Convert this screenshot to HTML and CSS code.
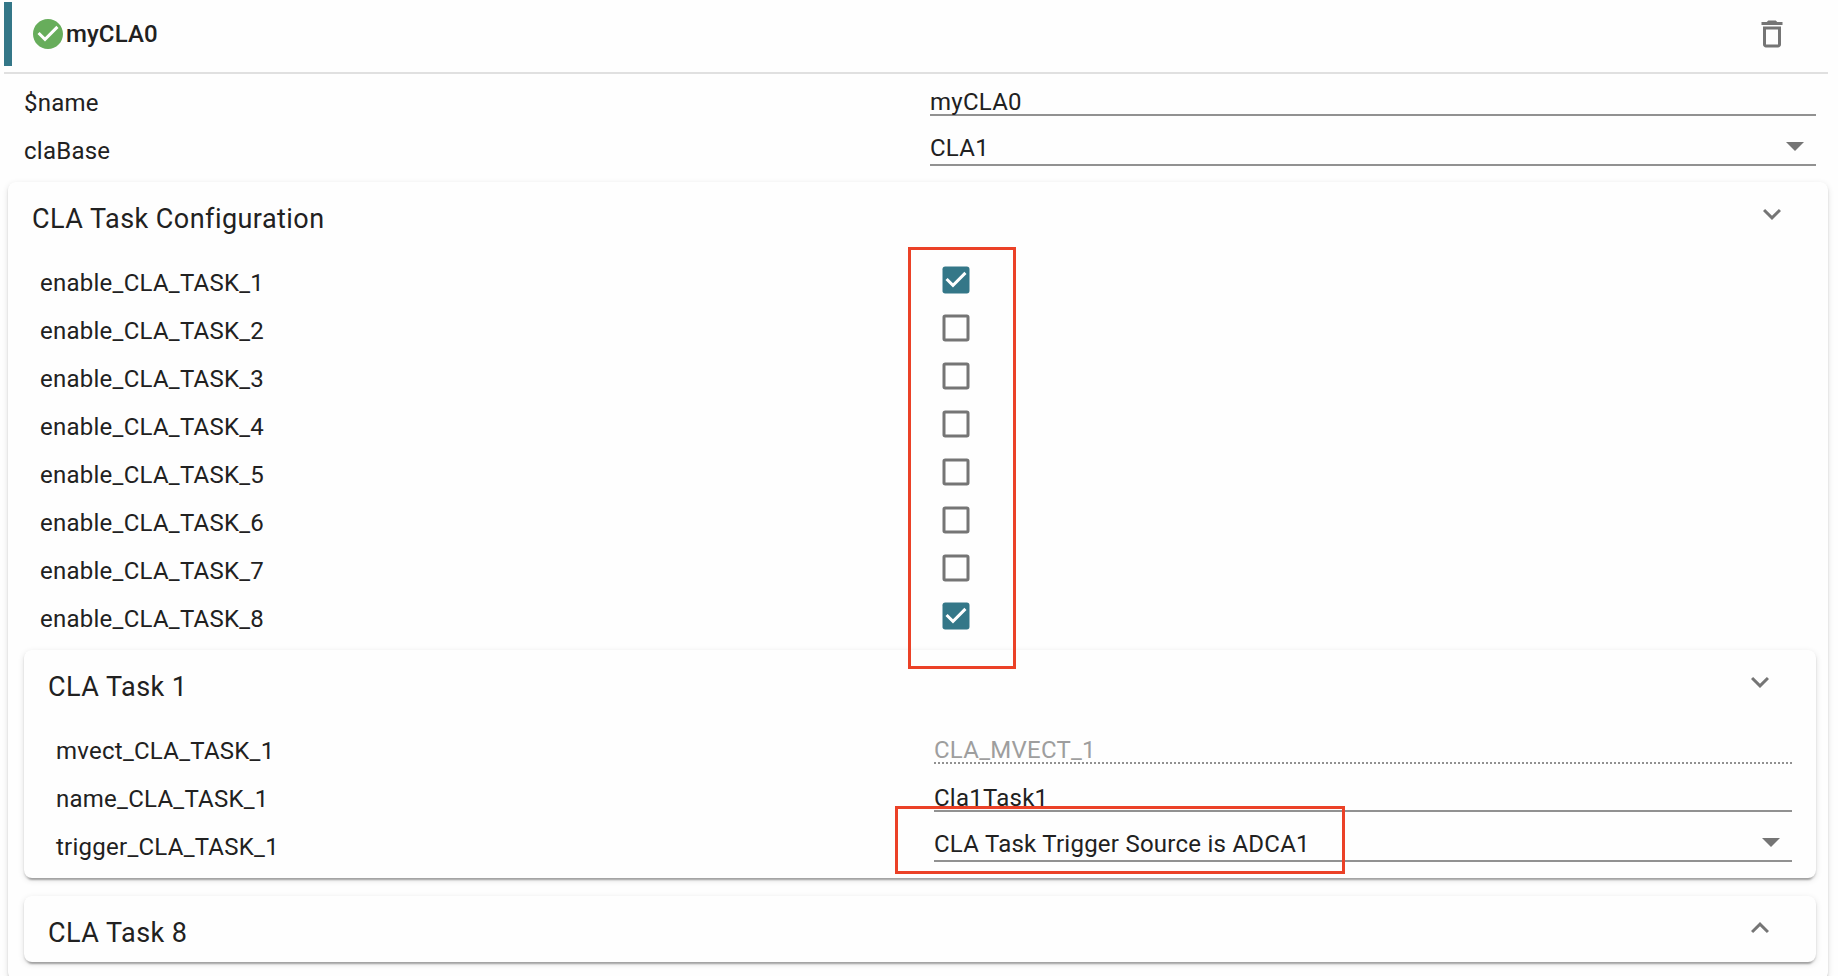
FILE: index.html
```html
<!DOCTYPE html>
<html lang="en">
<head>
<meta charset="utf-8">
<title>myCLA0</title>
<link rel="stylesheet" href="styles.css">
</head>
<body>
<svg class="defs" width="0" height="0">
  <symbol id="ok" viewBox="0 0 24 24"><path d="M12 2C6.48 2 2 6.48 2 12s4.48 10 10 10 10-4.48 10-10S17.52 2 12 2zm-2 15l-5-5 1.41-1.41L10 14.17l7.59-7.59L19 8l-9 9z"/></symbol>
  <symbol id="trash" viewBox="0 0 24 24"><path d="M6 19c0 1.1.9 2 2 2h8c1.1 0 2-.9 2-2V7H6v12zM8 9h8v10H8V9zm7.5-5l-1-1h-5l-1 1H5v2h14V4z"/></symbol>
  <symbol id="more" viewBox="0 0 24 24"><path d="M16.59 8.59L12 13.17 7.41 8.59 6 10l6 6 6-6z"/></symbol>
  <symbol id="less" viewBox="0 0 24 24"><path d="M12 8l-6 6 1.41 1.41L12 10.83l4.59 4.58L18 14z"/></symbol>
  <symbol id="on" viewBox="-.333 -.333 18.667 18.667"><rect width="18" height="18" rx="1.8"/><path class="tick" d="M7 14L2 9l1.41-1.41L7 11.17l7.59-7.59L16 5z"/></symbol>
  <symbol id="off" viewBox="-.333 -.333 18.667 18.667"><path fill-rule="evenodd" d="M1.8 0h14.4A1.8 1.8 0 0 1 18 1.8v14.4a1.8 1.8 0 0 1-1.8 1.8H1.8A1.8 1.8 0 0 1 0 16.2V1.8A1.8 1.8 0 0 1 1.8 0zM2 2v14h14V2z"/></symbol>
  <symbol id="drop" viewBox="0 0 18 9"><path d="M0 0h18L9 9z"/></symbol>
</svg>
<main class="module">
  <header class="bar">
    <svg class="icon ok"><use href="#ok"/></svg>
    <h1 class="title">myCLA0</h1>
    <svg class="icon trash"><use href="#trash"/></svg>
  </header>

  <div class="rows">
    <div class="row"><span class="label">$name</span><div class="field">myCLA0</div></div>
    <div class="row"><span class="label">claBase</span><div class="field select">CLA1<svg class="drop"><use href="#drop"/></svg></div></div>
  </div>

  <section class="card outer">
    <div class="card-head"><h2>CLA Task Configuration</h2><svg class="icon"><use href="#more"/></svg></div>
    <div class="rows checks">
      <div class="row"><span class="label">enable_CLA_TASK_1</span><svg class="box on"><use href="#on"/></svg></div>
      <div class="row"><span class="label">enable_CLA_TASK_2</span><svg class="box"><use href="#off"/></svg></div>
      <div class="row"><span class="label">enable_CLA_TASK_3</span><svg class="box"><use href="#off"/></svg></div>
      <div class="row"><span class="label">enable_CLA_TASK_4</span><svg class="box"><use href="#off"/></svg></div>
      <div class="row"><span class="label">enable_CLA_TASK_5</span><svg class="box"><use href="#off"/></svg></div>
      <div class="row"><span class="label">enable_CLA_TASK_6</span><svg class="box"><use href="#off"/></svg></div>
      <div class="row"><span class="label">enable_CLA_TASK_7</span><svg class="box"><use href="#off"/></svg></div>
      <div class="row"><span class="label">enable_CLA_TASK_8</span><svg class="box on"><use href="#on"/></svg></div>
    </div>

    <section class="card inner">
      <div class="card-head"><h2>CLA Task 1</h2><svg class="icon"><use href="#more"/></svg></div>
      <div class="rows nested">
        <div class="row"><span class="label">mvect_CLA_TASK_1</span><div class="field disabled">CLA_MVECT_1</div></div>
        <div class="row"><span class="label">name_CLA_TASK_1</span><div class="field">Cla1Task1</div></div>
        <div class="row"><span class="label">trigger_CLA_TASK_1</span><div class="field select">CLA Task Trigger Source is ADCA1<svg class="drop"><use href="#drop"/></svg></div></div>
      </div>
    </section>

    <section class="card inner collapsed">
      <div class="card-head"><h2>CLA Task 8</h2><svg class="icon"><use href="#less"/></svg></div>
    </section>
  </section>
</main>
<div class="mark mark-checks"></div>
<div class="mark mark-trigger"></div>
</body>
</html>
```
FILE: styles.css
```css
* { box-sizing: border-box; }
body {
  margin: 0;
  height: 976px;
  overflow: hidden;
  position: relative;
  background: #fefefe;
  color: #212121;
  font-family: Roboto, "Liberation Sans", sans-serif;
  font-size: 24px;
  letter-spacing: 0.25px;
}
.defs { position: absolute; }
h1, h2 { margin: 0; }
.module { padding: 2px 10px 0 4px; }
.bar {
  display: flex;
  align-items: center;
  height: 72px;
  padding: 0 38px 6px 26px;
  border-bottom: 2px solid #e0e0e0;
  background: linear-gradient(#347788, #347788) 0 0 / 8px 64px no-repeat;
}
.title { font-size: 24px; font-weight: 500; line-height: 28px; letter-spacing: 0.1px; }
.icon { width: 36px; height: 36px; fill: #757575; flex: none; }
.ok { fill: #67ad5b; }
.trash { margin-left: auto; }
.rows { padding: 4px 12px 0 20px; }
.row { display: grid; grid-template-columns: 906px 1fr; height: 48px; }
.label { line-height: 50px; }
.field {
  height: 38px;
  padding-top: 10px;
  line-height: 28px;
  border-bottom: 2px solid #919191;
  white-space: nowrap;
}
.field.select {
  display: flex;
  justify-content: space-between;
  height: 40px;
  padding: 8px 12px 0 0;
}
.field.disabled { color: #9e9e9e; border-bottom-style: dotted; }
.drop { width: 18px; height: 9px; margin-top: 8px; fill: #757575; }
.card {
  border-radius: 8px;
  background: #fefefe;
  box-shadow: 0 6px 2px -4px rgba(0,0,0,.2), 0 2px 2px rgba(0,0,0,.14), 0 2px 6px rgba(0,0,0,.12);
}
.outer { margin: 8px 0 0 4px; height: 798px; }
.card-head {
  display: flex;
  justify-content: space-between;
  height: 76px;
  padding: 14px 38px 0 24px;
}
.card-head h2 { font-size: 27px; font-weight: 400; line-height: 46px; letter-spacing: 0.45px; }
.checks { padding: 0 12px 8px 32px; }
.checks .row { grid-template-columns: 902px 28px; }
.box { width: 28px; height: 28px; margin-top: 8px; fill: #757575; }
.box.on { fill: #347788; }
.tick { fill: #fff; }
.inner { margin: 0 12px 18px 16px; }
.nested { padding: 0 24px 8px 32px; }
.nested .row { grid-template-columns: 878px 1fr; }
.collapsed .card-head { height: 66px; }
.mark { position: absolute; border: 3px solid #eb4127; }
.mark-checks { left: 908px; top: 247px; width: 108px; height: 422px; }
.mark-trigger { left: 895px; top: 806px; width: 450px; height: 68px; }
```
